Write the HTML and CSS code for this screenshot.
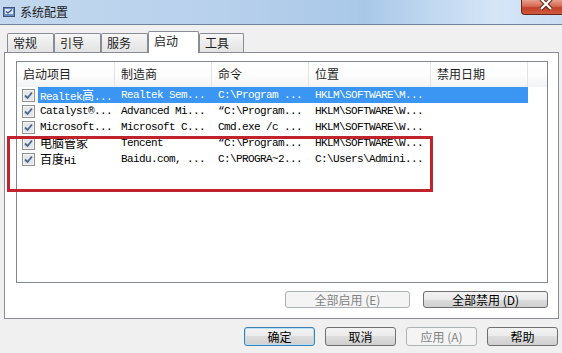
FILE: index.html
```html
<!DOCTYPE html>
<html lang="zh-CN">
<head>
    <meta charset="UTF-8">
    <title>系统配置</title>
    <link rel="stylesheet" href="styles.css">
</head>
<body>

<div class="window">
    <div class="titlebar">
        <svg class="app-icon" viewBox="0 0 12 10">
            <rect x="0.5" y="0.5" width="11" height="9" fill="#6d8fc4" stroke="#3f5573"/>
            <rect x="2" y="2" width="8" height="5" fill="#dfe9f6"/>
            <path d="M3 4.5 L5 6 L9 2.5" stroke="#2f4f86" stroke-width="1.3" fill="none"/>
        </svg>
        <span class="title">系统配置</span>
        <div class="close">
            <svg viewBox="0 0 14 11" width="14" height="11">
                <path d="M2 -1 L12 9 M12 -1 L2 9" stroke="#5a2318" stroke-width="4.2"/>
                <path d="M2 -1 L12 9 M12 -1 L2 9" stroke="#fff" stroke-width="2.2"/>
            </svg>
        </div>
    </div>

    <div class="tabs">
        <div class="tab">常规</div>
        <div class="tab">引导</div>
        <div class="tab">服务</div>
        <div class="tab active">启动</div>
        <div class="tab last">工具</div>
    </div>

    <div class="panel">
        <div class="list">
            <div class="row head">
                <div class="col">启动项目</div>
                <div class="col">制造商</div>
                <div class="col">命令</div>
                <div class="col">位置</div>
                <div class="col">禁用日期</div>
                <div class="col fill"></div>
            </div>

            <div class="row sel">
                <div class="first">
                    <svg class="check" viewBox="0 0 13 13"><rect x="0.5" y="0.5" width="12" height="12" fill="#f4f4f4" stroke="#8e8f8f"/><rect x="2" y="2" width="9" height="9" fill="#e4e6ea"/><path d="M3 6.5 L5.5 9 L10 3.5" stroke="#4a6592" stroke-width="1.8" fill="none"/></svg>
                    <span class="label">Realtek<span class="zh">高</span>...</span>
                </div>
                <div class="c">Realtek Sem...</div>
                <div class="c">C:\Program ...</div>
                <div class="c">HKLM\SOFTWARE\M...</div>
                <div class="c"></div>
                <div class="fill"></div>
            </div>

            <div class="row">
                <div class="first">
                    <svg class="check" viewBox="0 0 13 13"><rect x="0.5" y="0.5" width="12" height="12" fill="#f4f4f4" stroke="#8e8f8f"/><rect x="2" y="2" width="9" height="9" fill="#e4e6ea"/><path d="M3 6.5 L5.5 9 L10 3.5" stroke="#4a6592" stroke-width="1.8" fill="none"/></svg>
                    <span class="label">Catalyst®...</span>
                </div>
                <div class="c">Advanced Mi...</div>
                <div class="c">“C:\Program...</div>
                <div class="c">HKLM\SOFTWARE\W...</div>
                <div class="c"></div>
                <div class="fill"></div>
            </div>

            <div class="row">
                <div class="first">
                    <svg class="check" viewBox="0 0 13 13"><rect x="0.5" y="0.5" width="12" height="12" fill="#f4f4f4" stroke="#8e8f8f"/><rect x="2" y="2" width="9" height="9" fill="#e4e6ea"/><path d="M3 6.5 L5.5 9 L10 3.5" stroke="#4a6592" stroke-width="1.8" fill="none"/></svg>
                    <span class="label">Microsoft...</span>
                </div>
                <div class="c">Microsoft C...</div>
                <div class="c">Cmd.exe /c ...</div>
                <div class="c">HKLM\SOFTWARE\W...</div>
                <div class="c"></div>
                <div class="fill"></div>
            </div>

            <div class="row">
                <div class="first">
                    <svg class="check" viewBox="0 0 13 13"><rect x="0.5" y="0.5" width="12" height="12" fill="#f4f4f4" stroke="#8e8f8f"/><rect x="2" y="2" width="9" height="9" fill="#e4e6ea"/><path d="M3 6.5 L5.5 9 L10 3.5" stroke="#4a6592" stroke-width="1.8" fill="none"/></svg>
                    <span class="label"><span class="zh">电脑管家</span></span>
                </div>
                <div class="c">Tencent</div>
                <div class="c">“C:\Program...</div>
                <div class="c">HKLM\SOFTWARE\W...</div>
                <div class="c"></div>
                <div class="fill"></div>
            </div>

            <div class="row">
                <div class="first">
                    <svg class="check" viewBox="0 0 13 13"><rect x="0.5" y="0.5" width="12" height="12" fill="#f4f4f4" stroke="#8e8f8f"/><rect x="2" y="2" width="9" height="9" fill="#e4e6ea"/><path d="M3 6.5 L5.5 9 L10 3.5" stroke="#4a6592" stroke-width="1.8" fill="none"/></svg>
                    <span class="label"><span class="zh">百度</span>Hi</span>
                </div>
                <div class="c">Baidu.com, ...</div>
                <div class="c">C:\PROGRA~2...</div>
                <div class="c">C:\Users\Admini...</div>
                <div class="c"></div>
                <div class="fill"></div>
            </div>
        </div>

        <div class="panel-buttons">
            <button type="button" class="btn wide" disabled>全部启用 (E)</button>
            <button type="button" class="btn wide">全部禁用 (D)</button>
        </div>
    </div>

    <div class="footer">
        <button type="button" class="btn default">确定</button>
        <button type="button" class="btn">取消</button>
        <button type="button" class="btn" disabled>应用 (A)</button>
        <button type="button" class="btn">帮助</button>
    </div>

    <!-- annotation box drawn over the list -->
    <div class="mark"></div>
</div>

</body>
</html>
```

FILE: styles.css
```css
* {
    box-sizing: border-box;
}

body {
    margin: 0;
    width: 562px;
    height: 353px;
    overflow: hidden;
    background-color: #f0f0f0;
    font-family: "Noto Sans CJK SC", "Liberation Sans", sans-serif;
    font-size: 12px;
    line-height: 16px;
    color: #1e1e1e;
}

.window {
    position: relative;
    height: 353px;
}

.titlebar {
    height: 25px;
    border-bottom: 1px solid #6f849c;
    background: linear-gradient(90deg, #c3d8ef 0%, #b7d0ec 40%, #a9c8e8 65%, #d6e6f7 88%, #c9ddf3 100%);
    display: flex;
    align-items: center;
    padding-left: 3px;
}

.app-icon {
    width: 12px;
    height: 10px;
    margin-right: 5px;
}

.title {
    color: #1b1b1b;
}

.close {
    margin-left: auto;
    align-self: flex-start;
    width: 41px;
    height: 15px;
    border: 1px solid #6a2418;
    border-top: none;
    border-right: none;
    border-radius: 0 0 0 4px;
    background: linear-gradient(#e6a08e, #d56a52 45%, #c2402a 55%, #cf5a3c);
    display: flex;
    justify-content: center;
    padding-left: 7px;
}

.tabs {
    height: 27px;
    display: flex;
    align-items: flex-end;
    padding-left: 7px;
}

.tab {
    width: 47px;
    height: 19px;
    border: 1px solid #898c95;
    border-bottom: none;
    border-radius: 2px 2px 0 0;
    background: linear-gradient(#f7f7f7, #ececec 50%, #e3e3e3);
    padding: 1px 0 0 5px;
    line-height: 16px;
}

.tab.active {
    width: 51px;
    height: 22px;
    margin-bottom: -1px;
    background: #fff;
    padding-top: 1px;
    position: relative;
    z-index: 1;
}

.tab.last {
    width: 45px;
}

.panel {
    margin: 0 3px 0 4px;
    height: 267px;
    border: 1px solid #898c95;
    background-color: #fff;
    padding: 8px 10px 0 11px;
}

.list {
    height: 222px;
    border: 1px solid #828790;
    overflow: hidden;
}

.row {
    display: grid;
    grid-template-columns: 98px 97px 97px 122px 97px 1fr;
    height: 16px;
    line-height: 16px;
    white-space: nowrap;
}

.head {
    height: 25px;
    background: linear-gradient(#ffffff, #fdfdfd 50%, #f2f3f5);
}

.head .col {
    border-right: 1px solid #e2e3e6;
    padding-left: 6px;
    line-height: 24px;
    overflow: hidden;
}

.head .fill {
    border-right: none;
}

.first {
    display: flex;
    align-items: center;
    padding-left: 5px;
}

.check {
    width: 13px;
    height: 13px;
    flex: none;
}

.label {
    flex: 1;
    margin-left: 3px;
    padding-left: 2px;
    height: 16px;
    overflow: hidden;
}

.label, .c {
    font-family: "Liberation Mono", monospace;
    font-size: 11px;
    letter-spacing: -0.6px;
    color: #000;
}

.c {
    padding-left: 6px;
    overflow: hidden;
}

.zh {
    font-family: "Noto Sans CJK SC", sans-serif;
    font-size: 12px;
    letter-spacing: 0;
}

.sel .label, .sel .c {
    background-color: #3a96f2;
    color: #fff;
}

.panel-buttons {
    display: flex;
    justify-content: flex-end;
    gap: 13px;
    margin-top: 8px;
}

.btn {
    height: 19px;
    width: 71px;
    padding: 0;
    font-family: "Noto Sans CJK SC", sans-serif;
    font-size: 12px;
    line-height: 16px;
    color: #000;
    border: 1px solid #707070;
    border-radius: 3px;
    background: linear-gradient(#f2f2f2, #ebebeb 50%, #dddddd 50%, #cfcfcf);
}

.btn.wide {
    width: 125px;
    height: 17px;
    line-height: 14px;
}

.btn:disabled {
    border-color: #adb2b5;
    background: #f4f4f4;
    color: #838383;
}

.btn.default {
    border-color: #3c7fb1;
    box-shadow: inset 0 0 0 1px #b6e0f7;
}

.footer {
    display: flex;
    justify-content: flex-end;
    gap: 10px;
    margin-top: 8px;
    padding-right: 4px;
}

.mark {
    position: absolute;
    left: 7px;
    top: 136px;
    width: 426px;
    height: 56px;
    border: 3px solid #c0232b;
}
```
